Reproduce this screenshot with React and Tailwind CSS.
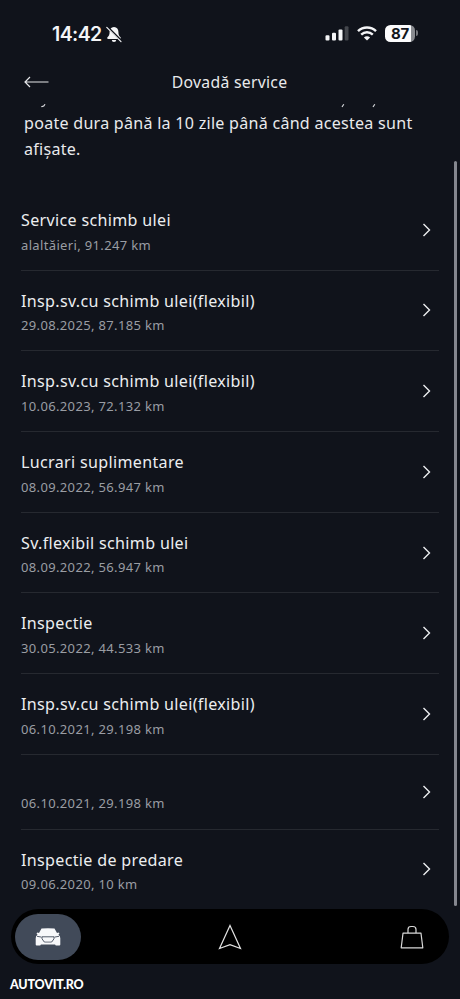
const SERVICES = [
  { id: 1, title: 'Service schimb ulei', meta: 'alaltăieri, 91.247 km' },
  { id: 2, title: 'Insp.sv.cu schimb ulei(flexibil)', meta: '29.08.2025, 87.185 km' },
  { id: 3, title: 'Insp.sv.cu schimb ulei(flexibil)', meta: '10.06.2023, 72.132 km' },
  { id: 4, title: 'Lucrari suplimentare', meta: '08.09.2022, 56.947 km' },
  { id: 5, title: 'Sv.flexibil schimb ulei', meta: '08.09.2022, 56.947 km' },
  { id: 6, title: 'Inspectie', meta: '30.05.2022, 44.533 km' },
  { id: 7, title: 'Insp.sv.cu schimb ulei(flexibil)', meta: '06.10.2021, 29.198 km' },
  { id: 8, title: '', meta: '06.10.2021, 29.198 km' },
  { id: 9, title: 'Inspectie de predare', meta: '09.06.2020, 10 km' },
]

function StatusBar() {
  return (
    <div className="flex h-[66px] items-center justify-between pr-[42px] pl-[52px] font-['Inter',sans-serif]">
      <div className="flex items-center gap-[4px] pt-[2px]">
        <span className="text-[19.5px] leading-6 font-semibold tracking-[-0.6px]">14:42</span>
        <svg width="16" height="17" viewBox="0 0 16 17" aria-hidden="true">
          <path
            d="M8 1c-3 0-4.400 2.200-4.400 4.800 0 3-.7 4.200-2.100 5.500-.6.600-.3 1.600.6 1.600h11.800c.9 0 1.200-1 .6-1.600-1.400-1.300-2.100-2.500-2.100-5.500C12.400 3.200 11 1 8 1zM5.800 14a2.200 2 0 0 0 4.400 0z"
            fill="#f4f5f7"
          />
          <path d="M1.700 1.200l14 14" stroke="#10131b" strokeWidth="2.200" />
          <path d="M.8 1.400l14.200 14.200" stroke="#f4f5f7" strokeWidth="1.200" strokeLinecap="round" />
        </svg>
      </div>
      <div className="flex items-center gap-[8px]">
        <svg width="24" height="16" viewBox="0 0 24 16" fill="#f4f5f7" aria-hidden="true">
          <rect x="0.500" y="10.300" width="4" height="5.200" rx="1.100" />
          <rect x="7" y="7.800" width="4" height="7.700" rx="1.100" />
          <rect x="13.500" y="4.500" width="4" height="11" rx="1.100" />
          <rect x="19.700" y="1.200" width="3.800" height="14.300" rx="1.100" fill="#43464c" />
        </svg>
        <svg width="20" height="15" viewBox="0 0 20 15" fill="none" stroke="#f4f5f7" aria-hidden="true">
          <path d="M1 5.200C6 .4 14 .4 19 5.200" strokeWidth="2.500" />
          <path d="M4.200 8.600c3.300-3.100 8.300-3.100 11.600 0" strokeWidth="2.400" />
          <path d="M10 14.600l-3.100-3.100c1.800-1.600 4.400-1.600 6.200 0z" fill="#f4f5f7" stroke="none" />
        </svg>
        <div className="flex items-center gap-px">
          <div className="flex h-[17px] w-[30px] items-center justify-center rounded-[5.500px] bg-[linear-gradient(90deg,#fcfcfd_87%,#898b90_87%)]">
            <span className="text-[15px] leading-none font-bold tracking-[-0.3px] text-[#12151c]">87</span>
          </div>
          <div className="h-[6px] w-[2px] rounded-r-full bg-[#75777c]" />
        </div>
      </div>
    </div>
  )
}

function Header() {
  return (
    <header className="grid h-[32px] grid-cols-[1fr_auto_1fr] items-center px-[24px]">
      <svg width="25" height="12" viewBox="0 0 25 12" fill="none" stroke="#e6e7ea" strokeWidth="1.200" aria-hidden="true">
        <path d="M6 1L1 6l5 5M1 6h23.500" />
      </svg>
      <h1 className="scale-x-[0.955] text-[16.5px] leading-6 tracking-[0.3px] text-[#e9eaec]">Dovadă service</h1>
    </header>
  )
}

function Notice() {
  return (
    <div className="h-[92px] pl-[24px]">
      {/* descenders of the line that scrolled under the header */}
      <svg className="block" width="400" height="12" fill="none" stroke="#d5d7db" strokeWidth="1.200" aria-hidden="true">
        <path d="M17.300 8.500q2.700.3 3.700-2.200M318 9l1.800-2.800M349 9l1.800-2.800" />
      </svg>
      <p className="origin-left scale-x-[0.945] text-[17px] leading-[25.500px] tracking-[0.28px] text-[#e9eaec]">
        poate dura până la 10 zile până când acestea sunt
        <br />
        afișate.
      </p>
    </div>
  )
}

function ServiceRow({ service }) {
  return (
    <li className="flex items-center justify-between border-b border-[#262930] pt-[18px] pb-[14.700px] pr-[8px] last:border-transparent">
      <div>
        <p className="h-[24px] origin-left scale-x-[0.945] text-[17px] leading-6 tracking-[0.35px] text-[#eceef0] empty:h-[18px]">
          {service.title}
        </p>
        <p className="mt-[2.500px] h-[20.500px] text-[13px] leading-5 tracking-[0.350px] text-[#9a9da3]">{service.meta}</p>
      </div>
      <svg className="mt-[-3.500px]" width="9" height="14" viewBox="0 0 9 14" fill="none" stroke="#eceef0" strokeWidth="1.400" aria-hidden="true">
        <path d="M1.500 1l6 6-6 6" />
      </svg>
    </li>
  )
}

function TabBar() {
  return (
    <nav className="mx-[11px] flex h-[55px] items-center justify-between rounded-full bg-black pr-[25px] pl-[4px]">
      <div className="flex h-[46px] w-[66px] items-center justify-center rounded-full bg-[#414a59]">
        <svg width="26" height="18" viewBox="0 0 26 18" aria-hidden="true">
          <path
            d="M6.500.6Q13-.2 19.500.6L22 5l1.500-.5 1 .8-1 1.500q1.800 1.200 1.800 3.400v6.300q0 1-1 1h-3.200q-.8 0-1-.9H5.900q-.2.9-1 .9H1.700q-1 0-1-1v-6.300Q.7 8 2.500 6.800l-1-1.500 1-.8L4 5z"
            fill="#f7f8fa"
          />
          <path
            d="M2 8.300l4.500.8M24 8.300l-4.500.8M7 8.800h12v2L16.700 14H9.300L7 10.800z"
            fill="none"
            stroke="#414a59"
            strokeWidth="0.9"
          />
          <path d="M9 10.500h8v1.300l-1 1.500h-6l-1-1.500z" fill="#f7f8fa" />
        </svg>
      </div>
      <svg className="ml-[-22px]" width="24" height="26" viewBox="0 0 24 26" fill="none" stroke="#e4e4e4" strokeWidth="1.200" aria-hidden="true">
        <path d="M12 1.500L22.500 24.500 12 20.700 1.500 24.500z" />
      </svg>
      <svg width="24" height="24" viewBox="0 0 24 24" fill="none" stroke="#d8d8d8" strokeWidth="1.200" aria-hidden="true">
        <path d="M3 8.200h18l1.800 14.600H1.200zM8 8.200V4.500q0-3 3-3h2q3 0 3 3v3.700" strokeLinejoin="round" />
      </svg>
    </nav>
  )
}

export default function App() {
  return (
    <main className="relative flex h-[999px] w-[460px] flex-col overflow-hidden bg-[#10131b] font-['Noto_Sans',sans-serif] text-[#f4f5f7]">
      <StatusBar />
      <Header />
      <Notice />
      <ul className="h-[719px] pr-[21px] pl-[21px]">
        {SERVICES.map((service) => (
          <ServiceRow key={service.id} service={service} />
        ))}
      </ul>
      <TabBar />
      <footer className="pt-[11px] pl-[10px] font-['Lato',sans-serif] text-[12.5px] leading-5 font-black tracking-[-0.2px] text-white">
        AUTOVIT.RO
      </footer>
      <div className="absolute top-[161px] right-[3px] h-[745px] w-[3px] rounded-full bg-[#85878f]" aria-hidden="true" />
    </main>
  )
}
